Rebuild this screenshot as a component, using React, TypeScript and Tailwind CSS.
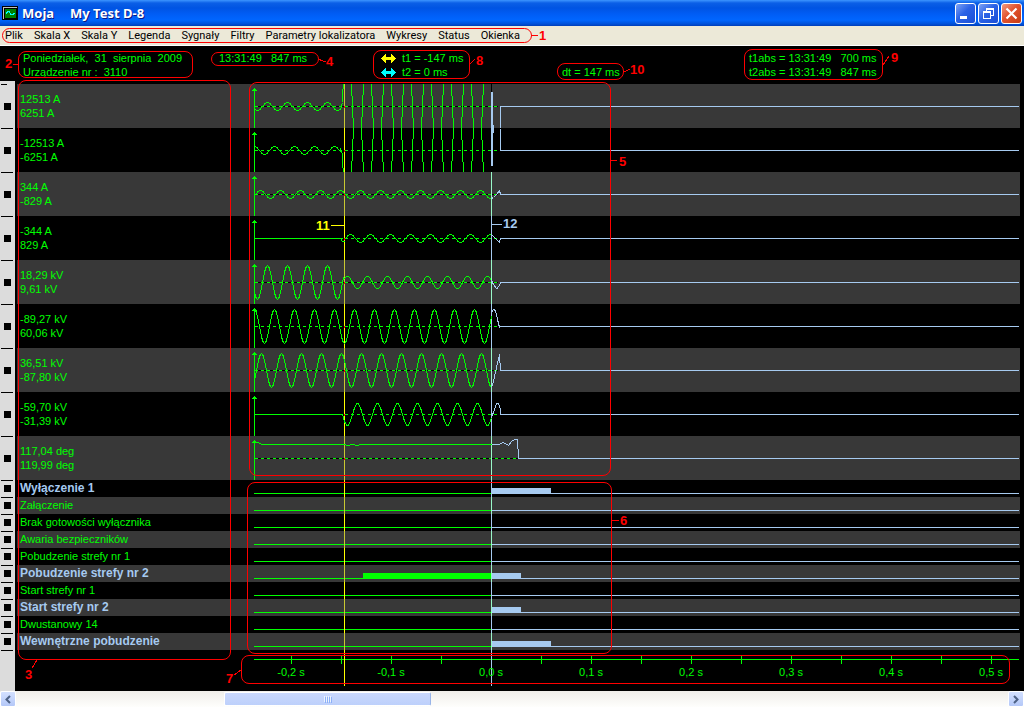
import clsx from 'clsx';

type Segment = { from: number; to: number; amp: number; crest: number };

type Channel = {
  id: string;
  values: [string, string];
  waves: Segment[];
  flat?: boolean;
  pre?: string;
  post: string;
  burst?: 'up' | 'down';
  dashEnd?: number;
};

const GREEN = '#00ff00';
const BLUE = '#a6caf0';

// x is time in ms, one pixel per ms, y = 0 is the zero line
function wave({ from, to, amp, crest }: Segment) {
  const points: string[] = [];
  for (let t = from; t <= to; t++) {
    const y = -amp * Math.cos((2 * Math.PI * (t - crest)) / 20);
    points.push(`${t},${y.toFixed(1)}`);
  }
  return points.join(' ');
}

const channels: Channel[] = [
  {
    id: 'i1',
    values: ['12513 A', '6251 A'],
    waves: [
      { from: -237, to: -151, amp: 4, crest: -224 },
      { from: -143, to: -1, amp: 71, crest: -144 },
    ],
    pre: '-151,3 -149,-4 -148,-30',
    post: '9,22 9,0 2000,0',
    burst: 'up',
  },
  {
    id: 'i2',
    values: ['-12513 A', '-6251 A'],
    waves: [
      { from: -237, to: -151, amp: 4, crest: -217 },
      { from: -143, to: -1, amp: 71, crest: -134 },
    ],
    pre: '-151,-2 -149,4 -148,30',
    post: '9,-22 9,0 2000,0',
    burst: 'down',
  },
  {
    id: 'i3',
    values: ['344 A', '-829 A'],
    waves: [{ from: -237, to: 0, amp: 4, crest: -231 }],
    post: '0,4 2,3 5,0 8,-4 9,0 2000,0',
  },
  {
    id: 'i4',
    values: ['-344 A', '829 A'],
    flat: true,
    waves: [{ from: -147, to: 0, amp: 4, crest: -141 }],
    pre: '-151,0 -149,3 -147,3',
    post: '0,-4 3,-1 5,1 8,4 9,0 2000,0',
  },
  {
    id: 'u1',
    values: ['18,29 kV', '9,61 kV'],
    waves: [
      { from: -237, to: -148, amp: 17, crest: -224 },
      { from: -147, to: 0, amp: 6, crest: -144 },
    ],
    post: '0,-2 2,2 5,6 7,5 9,0 2000,0',
  },
  {
    id: 'u2',
    values: ['-89,27 kV', '60,06 kV'],
    waves: [{ from: -237, to: 0, amp: 17, crest: -217 }],
    post: '0,-14 2,-17 4,-16 6,-7 8,1 8,0 2000,0',
  },
  {
    id: 'u3',
    values: ['36,51 kV', '-87,80 kV'],
    waves: [{ from: -237, to: 0, amp: 17, crest: -230 }],
    post: '0,17 2,11 5,-3 8,-16 9,0 2000,0',
  },
  {
    id: 'u4',
    values: ['-59,70 kV', '-31,39 kV'],
    flat: true,
    waves: [{ from: -146, to: 0, amp: 11, crest: -134 }],
    pre: '-149,0 -147,7 -146,9',
    post: '0,2 2,-2 5,-11 7,-11 9,-5 9,0 2000,0',
  },
  {
    id: 'phi',
    values: ['117,04 deg', '119,99 deg'],
    waves: [],
    pre: '-237,-16 -233,-16 -230,-14 -147,-14 -144,-13 -139,-14 -134,-13 -131,-14 0,-14',
    post: '0,-14 8,-14 11,-16 14,-15 17,-13 20,-17 23,-19 26,-19 27,0 2000,0',
    dashEnd: 26,
  },
];

const digitals = [
  { name: 'Wyłączenie 1', active: true, bars: [[0, 59]] },
  { name: 'Załączenie', active: false, bars: [] },
  { name: 'Brak gotowości wyłącznika', active: false, bars: [] },
  { name: 'Awaria bezpieczników', active: false, bars: [] },
  { name: 'Pobudzenie strefy nr 1', active: false, bars: [] },
  { name: 'Pobudzenie strefy nr 2', active: true, bars: [[-129, -1], [0, 29]] },
  { name: 'Start strefy nr 1', active: false, bars: [] },
  { name: 'Start strefy nr 2', active: true, bars: [[0, 29]] },
  { name: 'Dwustanowy 14', active: false, bars: [] },
  { name: 'Wewnętrzne pobudzenie', active: true, bars: [[0, 59]] },
];

const ticks = [-200, -150, -100, -50, 0, 50, 100, 150, 200, 250, 300, 350, 400, 450, 500];
const tickLabels = ['-0,2 s', '-0,1 s', '0,0 s', '0,1 s', '0,2 s', '0,3 s', '0,4 s', '0,5 s'];

const menu = [
  'Plik',
  'Skala X',
  'Skala Y',
  'Legenda',
  'Sygnały',
  'Filtry',
  'Parametry lokalizatora',
  'Wykresy',
  'Status',
  'Okienka',
];

const frames = [
  'left-[2px] top-[28px] w-[530px] h-[15px]',
  'left-[18px] top-[51px] w-[175px] h-[27px]',
  'left-[211px] top-[52px] w-[108px] h-[14px]',
  'left-[373px] top-[50px] w-[97px] h-[29px]',
  'left-[557px] top-[63px] w-[67px] h-[17px]',
  'left-[744px] top-[49px] w-[139px] h-[31px]',
  'left-[18px] top-[80px] w-[213px] h-[580px]',
  'left-[249px] top-[82px] w-[362px] h-[394px]',
  'left-[247px] top-[482px] w-[365px] h-[172px]',
  'left-[241px] top-[655px] w-[769px] h-[29px]',
];

const numbers = [
  { n: '1', at: 'left-[539px] top-[28px] text-[#ff0000]' },
  { n: '2', at: 'left-[5px] top-[56px] text-[#ff0000]' },
  { n: '3', at: 'left-[25px] top-[667px] text-[#ff0000]' },
  { n: '4', at: 'left-[326px] top-[54px] text-[#ff0000]' },
  { n: '5', at: 'left-[619px] top-[154px] text-[#ff0000]' },
  { n: '6', at: 'left-[620px] top-[513px] text-[#ff0000]' },
  { n: '7', at: 'left-[226px] top-[671px] text-[#ff0000]' },
  { n: '8', at: 'left-[476px] top-[53px] text-[#ff0000]' },
  { n: '9', at: 'left-[891px] top-[50px] text-[#ff0000]' },
  { n: '10', at: 'left-[630px] top-[62px] text-[#ff0000]' },
  { n: '11', at: 'left-[316px] top-[218px] text-[#ffff00]' },
  { n: '12', at: 'left-[503px] top-[216px] text-[#a6caf0]' },
];

function TitleBar() {
  const button =
    'flex h-[21px] w-[21px] items-center justify-center rounded-[3px] border border-white';
  return (
    <header className="flex h-[26px] items-center bg-[linear-gradient(#3d95ff_0,#0b5fe6_3px,#0054e3_8px,#005df5_14px,#0066ff_20px,#0050d8_24px,#003db8_26px)] pr-[2px] pl-[2px]">
      <svg width="16" height="14" viewBox="0 0 16 14" shapeRendering="crispEdges">
        <rect width="16" height="14" rx="1" fill="#000" />
        <rect x="1" y="1" width="14" height="12" fill="#c0c0c0" />
        <rect x="2" y="2" width="12" height="10" fill="#008000" stroke="#000" />
        <path d="M4 7.500L6 5.500H7L9 8.500H11L12.500 7" fill="none" stroke="#00ffff" />
      </svg>
      <h1 className="ml-1 flex gap-4 font-['Noto_Sans',sans-serif] text-[13px] leading-[26px] font-bold text-white [text-shadow:1px_1px_#0a1883]">
        <span>Moja</span>
        <span>My Test D-8</span>
      </h1>
      <div className="ml-auto flex gap-[2px]">
        <button aria-label="Minimize" className={clsx(button, 'bg-[linear-gradient(135deg,#7da2f5,#2b62e6_45%,#1a4fd6)]')}>
          <svg width="15" height="15" shapeRendering="crispEdges">
            <rect x="2" y="10" width="7" height="3" fill="#fff" />
          </svg>
        </button>
        <button aria-label="Restore" className={clsx(button, 'bg-[linear-gradient(135deg,#7da2f5,#2b62e6_45%,#1a4fd6)]')}>
          <svg width="15" height="15" fill="none" stroke="#fff" shapeRendering="crispEdges">
            <path d="M5.500 5V3.500H12.500V9.500H10M5 2.500H13" />
            <path d="M2.500 6.500H9.500V12.500H2.500ZM2 5.500H10" />
          </svg>
        </button>
        <button aria-label="Close" className={clsx(button, 'bg-[linear-gradient(135deg,#f09a80,#e2532e_45%,#c63c14)]')}>
          <svg width="15" height="15" stroke="#fff" strokeWidth="2.200">
            <path d="M2.500 2.500L12.500 12.500M12.500 2.500L2.500 12.500" />
          </svg>
        </button>
      </div>
    </header>
  );
}

function MenuBar() {
  return (
    <nav className="flex h-5 gap-[11px] border-b border-white bg-[#ece9d8] pl-[5px] font-['Roboto',sans-serif] text-[11px] leading-[18px] whitespace-nowrap text-black">
      {menu.map((item) => (
        <button key={item}>{item}</button>
      ))}
    </nav>
  );
}

function Arrow({ color }: { color: string }) {
  return (
    <svg width="15" height="9" viewBox="0 0 15 9" fill={color} shapeRendering="crispEdges">
      <path d="M0 4.500L5 0V3H10V0L15 4.500L10 9V6H5V9Z" />
    </svg>
  );
}

function Readouts() {
  return (
    <section className="grid h-[35px] grid-cols-[196px_162px_181px_187px_1fr] pt-[5px] pl-[23px] leading-[14px] whitespace-pre">
      <div>
        <p>Poniedziałek,  31  sierpnia  2009</p>
        <p>Urządzenie nr :  3110</p>
      </div>
      <p>13:31:49   847 ms</p>
      <div>
        <p className="flex items-center gap-[6px]">
          <Arrow color="#ffff00" />
          t1 = -147 ms
        </p>
        <p className="flex items-center gap-[6px]">
          <Arrow color="#00ffff" />
          t2 = 0 ms
        </p>
      </div>
      <p className="pt-[14px]">dt = 147 ms</p>
      <div>
        <p>t1abs = 13:31:49   700 ms</p>
        <p>t2abs = 13:31:49   847 ms</p>
      </div>
    </section>
  );
}

function Gutter() {
  return (
    <div className="w-[15px] shrink-0 bg-[#dcdcdc] px-[1px] pt-[3px]">
      {channels.map((c, i) => (
        <div key={c.id} className="h-11">
          <div className={clsx('h-px bg-black', i === 0 ? 'w-[6px]' : 'w-3')} />
          <div className="mt-[18px] ml-[3px] h-[7px] w-[7px] bg-black" />
        </div>
      ))}
      {digitals.map((d) => (
        <div key={d.name} className="h-[17px]">
          <div className="h-px w-3 bg-black" />
          <div className="mt-1 ml-[3px] h-[7px] w-[7px] bg-black" />
        </div>
      ))}
      <div className="h-px w-3 bg-black" />
    </div>
  );
}

function Cursors({ top, bottom, shaded, hideT2 }: { top: number; bottom: number; shaded: boolean; hideT2?: boolean }) {
  return (
    <>
      <path d={`M-147 ${top}V${bottom}`} stroke={shaded ? '#c8c832' : '#ffff00'} />
      {!hideT2 && <path d={`M0 ${top}V${bottom}`} stroke={shaded ? '#98f8c8' : BLUE} />}
    </>
  );
}

function ChannelRow({ channel, shaded }: { channel: Channel; shaded: boolean }) {
  const { values, waves, flat, pre, post, burst, dashEnd = 6 } = channel;
  return (
    <div className={clsx('flex h-11 pr-px', shaded && 'bg-[#383838]')}>
      <div className="w-[231px] shrink-0 pt-2 pl-[3px] leading-[14px]">
        <p>{values[0]}</p>
        <p>{values[1]}</p>
      </div>
      <svg className="h-11 min-w-0 flex-1" fill="none" shapeRendering="crispEdges">
        <g transform="translate(243.5 22.500)">
          <path d={`M-237 0H${dashEnd}`} stroke="#000" />
          <path d={`M-237 0H${dashEnd}`} stroke={GREEN} strokeDasharray="3 3" />
          {flat && <path d="M-237 0H-149" stroke={GREEN} />}
          <path d="M-237 -19V22M-238.500 -17H-235.500M-239.500 -16H-234.500" stroke={GREEN} />
          <Cursors top={-23} bottom={22} shaded={shaded} hideT2={!!burst} />
          {waves.map((w) => (
            <polyline key={w.from} points={wave(w)} stroke={GREEN} />
          ))}
          {pre && <polyline points={pre} stroke={GREEN} />}
          <path d="M-147 -1V1" stroke="#ff0000" />
          {burst === 'up' && (
            <>
              <path d="M0 -23V-15" stroke="#000" />
              <path d="M0 -15V22M1 -15V22M2 18V22" stroke={BLUE} />
            </>
          )}
          {burst === 'down' && <path d="M0 -23V15M1 -23V15M2 -23V-18" stroke={BLUE} />}
          <polyline points={post} stroke={BLUE} />
        </g>
      </svg>
    </div>
  );
}

function DigitalRow({ name, active, bars, shaded }: { name: string; active: boolean; bars: number[][]; shaded: boolean }) {
  return (
    <div className={clsx('flex h-[17px] pr-px', shaded && 'bg-[#383838]')}>
      <p className={clsx('w-[231px] shrink-0 pl-[3px] leading-[17px]', active && 'text-[12px] font-bold text-[#a6caf0]')}>{name}</p>
      <svg className="h-[17px] min-w-0 flex-1" fill="none" shapeRendering="crispEdges">
        <g transform="translate(243.5 13.500)">
          <path d="M-238 0H0" stroke={GREEN} />
          <path d="M0 0H2000" stroke={BLUE} />
          {bars.map(([from, to]) => (
            <rect key={from} x={from + 0.5} y="-5.500" width={to - from} height="6" fill={from < 0 ? GREEN : BLUE} />
          ))}
          <Cursors top={-14} bottom={4} shaded={shaded} />
        </g>
      </svg>
    </div>
  );
}

function TimeAxis() {
  return (
    <div className="h-[41px]">
      <div className="flex h-[15px] pr-px pl-[231px]">
        <svg className="h-[36px] min-w-0 flex-1" fill="none" shapeRendering="crispEdges">
          <g transform="translate(243.5 9.500)">
            <path d="M-238 0H2000" stroke={GREEN} />
            {ticks.map((t) => (
              <path key={t} d={`M${t} -4V4`} stroke={GREEN} />
            ))}
            <Cursors top={-10} bottom={26} shaded={false} />
          </g>
        </svg>
      </div>
      <div className="flex pl-[224px] leading-[14px]">
        {tickLabels.map((label) => (
          <span key={label} className="w-[100px] shrink-0 text-center">
            {label}
          </span>
        ))}
      </div>
    </div>
  );
}

function ScrollBar() {
  const arrow =
    'flex h-4 w-4 shrink-0 items-center justify-center rounded-[2px] border border-white bg-[linear-gradient(#d3e0ff,#b4c8f8)]';
  return (
    <div className="flex h-4 items-center bg-[linear-gradient(#f0eeea,#fefefc)]">
      <button aria-label="Scroll left" className={arrow}>
        <svg width="8" height="9" fill="none" stroke="#4d6185" strokeWidth="2">
          <path d="M6 1L2.500 4.500L6 8" />
        </svg>
      </button>
      <div className="flex min-w-0 flex-1">
        <div className="ml-[21%] flex h-[14px] w-[207px] items-center justify-center rounded-[2px] border border-white border-r-[#98b4e8] bg-[linear-gradient(#cad8fd,#bdd0fb)]">
          <svg width="8" height="7" shapeRendering="crispEdges">
            <path d="M0.500 0V6M2.500 0V6M4.500 0V6M6.500 0V6" stroke="#eef4fe" />
            <path d="M1.500 1V7M3.500 1V7M5.500 1V7M7.500 1V7" stroke="#8cb0f8" />
          </svg>
        </div>
      </div>
      <button aria-label="Scroll right" className={arrow}>
        <svg width="8" height="9" fill="none" stroke="#4d6185" strokeWidth="2">
          <path d="M2 1L5.500 4.500L2 8" />
        </svg>
      </button>
    </div>
  );
}

// numbered callouts drawn over the window
function Callouts() {
  return (
    <div className="pointer-events-none absolute inset-0 overflow-hidden">
      {frames.map((f) => (
        <div key={f} className={clsx('absolute rounded-[8px] border border-[#ff0000]', f)} />
      ))}
      <svg className="absolute inset-0 h-full w-full" stroke="#ff0000" shapeRendering="crispEdges">
        <path d="M531 35.500H538M13 64.500H18M319 59.500L326 62M470 64L475 59M624 72L630 69M883 65L889 56M611 160.500H617M612 520.500H619M37 660L32 668M241 670L234 675" />
        <path d="M331 225.500H344" stroke="#ffff00" />
        <path d="M492 224.500H502" stroke="#a6caf0" />
      </svg>
      {numbers.map(({ n, at }) => (
        <span key={n} className={clsx('absolute text-[13px] leading-[15px] font-bold', at)}>
          {n}
        </span>
      ))}
    </div>
  );
}

export default function App() {
  return (
    <div className="relative min-h-screen bg-black font-['Liberation_Sans',Arial,sans-serif] text-[11px] text-[#00ff00]">
      <TitleBar />
      <MenuBar />
      <Readouts />
      <main className="flex">
        <Gutter />
        <div className="min-w-0 flex-1 pt-[3px] pr-1 pl-[2px]">
          {channels.map((c, i) => (
            <ChannelRow key={c.id} channel={c} shaded={i % 2 === 0} />
          ))}
          {digitals.map((d, i) => (
            <DigitalRow key={d.name} {...d} shaded={i % 2 === 1} />
          ))}
          <TimeAxis />
        </div>
      </main>
      <ScrollBar />
      <Callouts />
    </div>
  );
}
